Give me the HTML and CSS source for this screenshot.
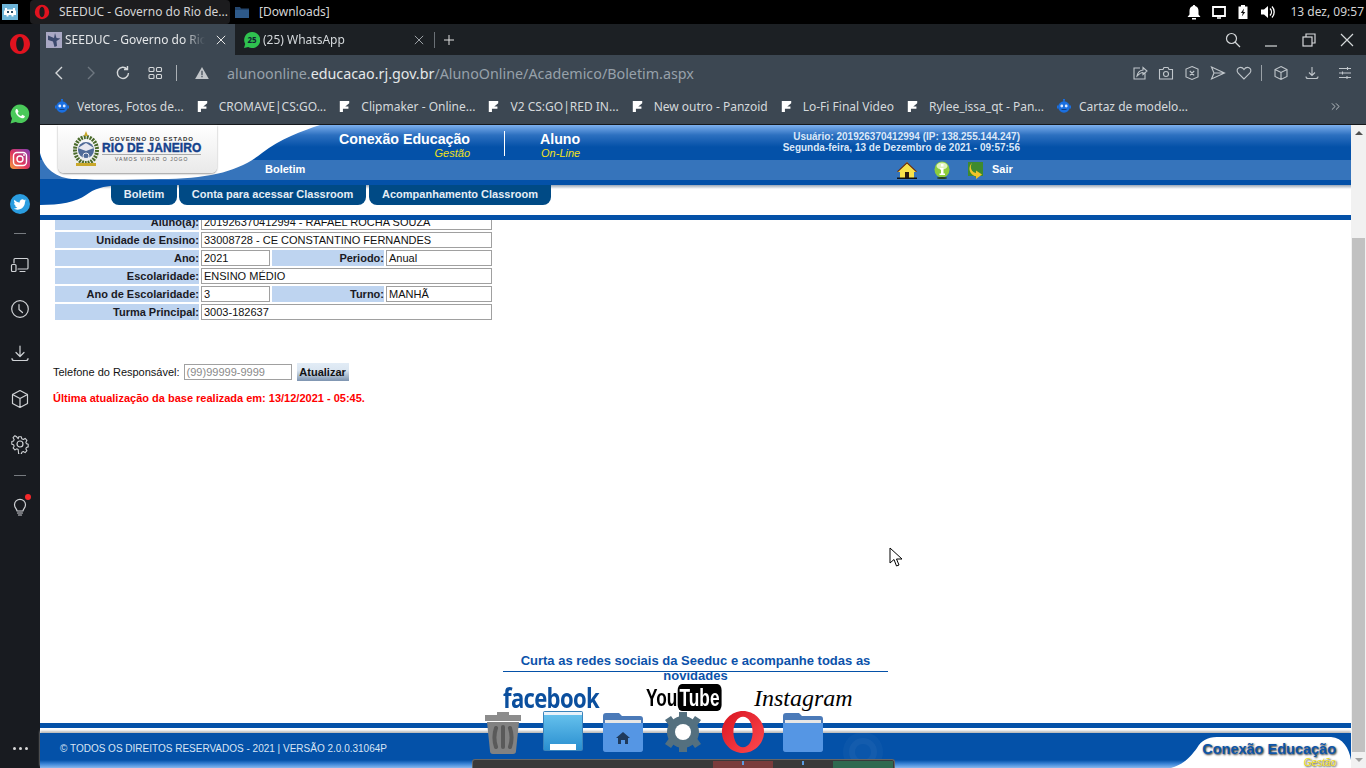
FILE: index.html
```html
<!DOCTYPE html>
<html lang="pt-BR">
<head>
    <meta charset="UTF-8">
    <title>SEEDUC - Governo do Rio de Janeiro</title>
    <link rel="stylesheet" href="styles.css">
</head>
<body>
    <!-- barra do sistema -->
    <div class="sysbar">
        <svg class="sys-app" viewBox="0 0 16 16"><rect width="16" height="16" fill="#6cb4d8"/><path d="M3 4h2v1.500h6V4h2v2.500h1V11h-2.500v1.500h-2V11h-3v1.500h-2V11H2V6.500h1z" fill="#fff"/><path d="M5 7h2v2H5zM9 7h2v2H9z" fill="#27506a"/></svg>
        <div class="task task-active">
            <svg class="task-icon" viewBox="0 0 20 20"><path fill-rule="evenodd" d="M10 1a9 9 0 0 1 9 9 9 9 0 0 1-9 9 9 9 0 0 1-9-9 9 9 0 0 1 9-9zm0 2.500c-2 0-3.300 2.900-3.300 6.500s1.300 6.500 3.300 6.500 3.300-2.900 3.300-6.500S12 3.500 10 3.500z" fill="#e0131f"/></svg>
            <span>SEEDUC - Governo do Rio de...</span>
        </div>
        <div class="task">
            <svg class="task-icon" viewBox="0 0 16 16"><path d="M1 3h5l1 1.500h8V14H1z" fill="#24476f"/><path d="M1 6h14v8H1z" fill="#2e5a8a"/></svg>
            <span>[Downloads]</span>
        </div>
        <div class="sys-right">
            <svg class="sys-ic" viewBox="0 0 16 16"><path d="M8 1c.8 0 1.200.5 1.200 1.100C11.500 2.700 12.500 4.500 12.500 7v3.500L14.500 13h-13l2-2.500V7c0-2.500 1-4.300 3.300-4.900C6.800 1.500 7.200 1 8 1z" fill="#fff"/><rect x="6" y="14" width="4" height="1.500" fill="#fff"/></svg>
            <svg class="sys-ic" viewBox="0 0 16 16"><path d="M2 3h12v9H2z" fill="none" stroke="#fff" stroke-width="1.800"/><path d="M6 14h4" stroke="#fff" stroke-width="1.500"/></svg>
            <svg class="sys-ic" viewBox="0 0 16 16"><path d="M3.500 2.500H6V1h4v1.500h2.500V15h-9z" fill="#fff"/><path d="M9 4.500 5.800 9h2l-1 3.500L10.300 8h-2z" fill="#111"/></svg>
            <svg class="sys-ic" viewBox="0 0 16 16"><path d="M1 5.500h3L8 2v12l-4-3.500H1z" fill="#fff"/><path d="M10 4.500a5 5 0 0 1 0 7M12 2.500a8 8 0 0 1 0 11" fill="none" stroke="#fff" stroke-width="1.300"/></svg>
            <span class="sys-clock">13 dez, 09:57</span>
        </div>
    </div>

    <div class="janela">
        <!-- barra lateral do opera -->
        <aside class="lateral">
            <div class="lat-opera">
                <svg class="ic-20" viewBox="0 0 20 20"><path fill-rule="evenodd" d="M10 0c5.500 0 10 4.500 10 10s-4.500 10-10 10S0 15.500 0 10 4.500 0 10 0zm0 2.800C7.800 2.800 6.200 6 6.200 10s1.600 7.200 3.800 7.200 3.800-3.200 3.800-7.200S12.200 2.800 10 2.800z" fill="#e0131f"/></svg>
            </div>
            <div class="lat-item">
                <svg class="ic-20" viewBox="0 0 20 20"><path d="M10 .500a9.300 9.300 0 0 0-8 14L.5 19.500l5.200-1.400A9.300 9.300 0 1 0 10 .500z" fill="#4ac95a"/><path d="M6.500 5c-1 .600-1.500 2-.8 3.700 1 2.400 3 4.400 5.500 5.400 1.600.600 3 .100 3.500-1 .2-.5.200-1 0-1.200l-2-1c-.3-.1-.5 0-.7.200l-.7.900c-.2.200-.4.200-.6.100-1.200-.5-2.300-1.500-3-2.800-.1-.2-.1-.4.100-.6l.6-.8c.1-.2.100-.4 0-.6l-.8-1.900C7.400 5 7 4.800 6.500 5z" fill="#fff"/></svg>
            </div>
            <div class="lat-item">
                <svg class="ic-20" viewBox="0 0 20 20"><defs><linearGradient id="ig" x1="0" y1="1" x2="1" y2="0"><stop offset="0" stop-color="#f7a33a"/><stop offset=".45" stop-color="#e0365f"/><stop offset="1" stop-color="#7d3fb5"/></linearGradient></defs><rect width="20" height="20" rx="4" fill="url(#ig)"/><rect x="3.500" y="3.500" width="13" height="13" rx="3.500" fill="none" stroke="#fff" stroke-width="1.400"/><circle cx="10" cy="10" r="3" fill="none" stroke="#fff" stroke-width="1.400"/><circle cx="14" cy="6" r=".9" fill="#fff"/></svg>
            </div>
            <div class="lat-item">
                <svg class="ic-20" viewBox="0 0 20 20"><circle cx="10" cy="10" r="10" fill="#2a9de0"/><path d="M16 6.500c-.5.200-1 .4-1.500.4.500-.3 1-.8 1.200-1.400-.5.300-1 .5-1.600.6a2.600 2.600 0 0 0-4.400 2.400C7.600 8.400 5.700 7.400 4.400 5.800c-.7 1.200-.3 2.700.8 3.500-.4 0-.8-.1-1.200-.3 0 1.300.9 2.400 2.100 2.600-.4.100-.8.100-1.200 0 .3 1.100 1.300 1.800 2.500 1.800-1.100.9-2.500 1.300-3.900 1.100 4.900 3 11.700-.1 11.500-7 .5-.3 1-.9 1.500-1.300z" fill="#fff"/></svg>
            </div>
            <div class="lat-sep lat-sep-a"></div>
            <div class="lat-item">
                <svg class="ic-20 traco" viewBox="0 0 20 20"><path d="M4 8V4.500c0-.6.400-1 1-1h12c.6 0 1 .4 1 1V13c0 .6-.4 1-1 1H8M10 16.500h5"/><rect x="1.500" y="9.500" width="4.500" height="7" rx="1"/></svg>
            </div>
            <div class="lat-item lat-curto">
                <svg class="ic-20 traco" viewBox="0 0 20 20"><circle cx="10" cy="10" r="8.300"/><path d="M9 5.500V10.500l3.500 3"/></svg>
            </div>
            <div class="lat-item">
                <svg class="ic-20 traco" viewBox="0 0 20 20"><path d="M10 2v10M6 8.500l4 4 4-4M2 14.500c0 1.300.7 2 2 2h12c1.300 0 2-.7 2-2"/></svg>
            </div>
            <div class="lat-item">
                <svg class="ic-20 traco" viewBox="0 0 20 20"><path d="M10 1.500l7.500 4v9l-7.500 4-7.500-4v-9zM2.500 5.500l7.500 4 7.500-4M10 9.500v9"/></svg>
            </div>
            <div class="lat-item">
                <svg class="ic-20 traco" viewBox="0 0 20 20"><circle cx="10" cy="10" r="3"/><path d="M8.500 2h3l.5 2.200 1.700.8 2-1.200 2 2.200-1.200 2 .6 1.600 2 .6v3l-2 .6-.6 1.600 1.200 2-2 2.200-2-1.200-1.700.8-.5 2.200h-3L8 16.200l-1.700-.8-2 1.200-2-2.200 1.200-2-.6-1.600-2-.6v-3l2-.6.600-1.600-1.200-2 2-2.200 2 1.200L8 4.200z" transform="translate(1 1) scale(.9)"/></svg>
            </div>
            <div class="lat-sep lat-sep-b"></div>
            <div class="lat-item lat-bulb">
                <svg class="ic-20 traco" viewBox="0 0 20 20"><path d="M7 14c0-2-2.500-3-2.500-6.200a5.500 5.500 0 0 1 11 0C15.500 11 13 12 13 14zM7.500 16h5M8.500 18h3"/></svg>
                <span class="bulb-dot"></span>
            </div>
            <div class="lat-dots"><i></i><i></i><i></i></div>
        </aside>

        <div class="navegador">
            <!-- abas -->
            <div class="abas">
                <div class="aba aba-ativa">
                    <svg class="aba-fav" viewBox="0 0 16 16"><rect width="16" height="16" fill="#a9a8c4"/><path d="M2 3.500 8 6l1-5 1.500 5 4 .500-4 2.500.5 5-2.500 1L7 9.500 2 8z" fill="#3c4a6e"/></svg>
                    <span class="aba-texto">SEEDUC - Governo do Rio</span>
                    <svg class="aba-x" viewBox="0 0 12 12"><path d="M1 1l10 10M11 1 1 11"/></svg>
                </div>
                <div class="aba aba-wa">
                    <svg class="aba-fav" viewBox="0 0 16 16"><path d="M8 0a8 8 0 0 0-6.800 12L0 16l4.200-1.100A8 8 0 1 0 8 0z" fill="#2fc24f"/><text x="8" y="11" class="aba-num">25</text></svg>
                    <span class="aba-texto aba-texto-wa">(25) WhatsApp</span>
                    <svg class="aba-x aba-x-2" viewBox="0 0 12 12"><path d="M1 1l10 10M11 1 1 11"/></svg>
                </div>
                <div class="aba-div"></div>
                <svg class="aba-mais" viewBox="0 0 12 12"><path d="M6 0v12M0 6h12"/></svg>
                <div class="janela-btns">
                    <svg class="jb" viewBox="0 0 16 16"><circle cx="6.500" cy="6.500" r="5"/><path d="M10 10l5 5"/></svg>
                    <svg class="jb" viewBox="0 0 16 16"><path d="M2 14h12"/></svg>
                    <svg class="jb" viewBox="0 0 16 16"><rect x="2" y="5" width="9" height="9"/><path d="M5 5V2h9v9h-3"/></svg>
                    <svg class="jb" viewBox="0 0 16 16"><path d="M2 2l12 12M14 2 2 14"/></svg>
                </div>
            </div>

            <!-- barra de endereco -->
            <div class="ferramentas">
                <svg class="tb tb-seta" viewBox="0 0 16 16"><path d="M11 2 5 8l6 6"/></svg>
                <svg class="tb tb-seta tb-off" viewBox="0 0 16 16"><path d="M5 2l6 6-6 6"/></svg>
                <svg class="tb tb-reload" viewBox="0 0 16 16"><path d="M13.500 8A5.600 5.600 0 1 1 12 4M12.500 1v3.500H9"/></svg>
                <svg class="tb tb-grid" viewBox="0 0 16 16"><rect x="2" y="2.500" width="5" height="4" rx="1"/><rect x="9.500" y="2.500" width="5" height="4" rx="1"/><rect x="2" y="9.500" width="5" height="4" rx="1"/><rect x="9.500" y="9.500" width="5" height="4" rx="1"/></svg>
                <div class="tb-div"></div>
                <svg class="tb-alerta" viewBox="0 0 16 14"><path d="M8 0 16 14H0z" fill="#c2c6ca"/><path d="M7.300 4.500h1.400v5H7.300zM7.300 10.500h1.400V12H7.300z" fill="#3c4752"/></svg>
                <div class="url">alunoonline.<span class="url-dom">educacao.rj.gov.br</span>/AlunoOnline/Academico/Boletim.aspx</div>
                <div class="tb-acoes">
                    <svg class="ta" viewBox="0 0 16 16"><path d="M8 3H2v11h11V8M5 11c.5-3 2.500-5.500 6-6V2.500L15 6l-4 3.500V7.500C9 7.500 7 9 5 11z"/></svg>
                    <svg class="ta" viewBox="0 0 16 16"><path d="M1.500 4.500H5L6 2.500h4l1 2h3.500V14h-13z"/><circle cx="8" cy="9" r="2.500"/></svg>
                    <svg class="ta" viewBox="0 0 16 16"><path d="M8 1.500 14 4v8l-6 2.500L2 12V4zM5.800 6l4.400 4.400M10.200 6l-4.400 4.400"/></svg>
                    <svg class="ta" viewBox="0 0 16 16"><path d="M1.500 2 14.500 8 1.500 14 4 8zM4 8h10"/></svg>
                    <svg class="ta" viewBox="0 0 16 16"><path d="M8 14 2 8C.5 6 1 3.500 3 2.700 5 2 7 3 8 4.500 9 3 11 2 13 2.700c2 .8 2.500 3.300 1 5.300z"/></svg>
                    <div class="ta-div"></div>
                    <svg class="ta" viewBox="0 0 16 16"><path d="M8 1.500l6 3v7l-6 3-6-3v-7zM2 4.500l6 3 6-3M8 7.500v7"/></svg>
                    <svg class="ta ta-dl" viewBox="0 0 16 16"><path d="M8 2v8M5 7.500l3 3 3-3M2 11.500c0 1.500.5 2 2 2h8c1.500 0 2-.5 2-2"/></svg>
                    <svg class="ta ta-aj" viewBox="0 0 16 16"><path d="M2 3.500h12M2 8h12M2 12.500h12M10.500 2v3M5.500 6.500v3M10 11v3"/></svg>
                </div>
            </div>

            <!-- favoritos -->
            <div class="favoritos">
                <div class="fav"><svg class="fav-robo" viewBox="0 0 14 14"><circle cx="7" cy="8" r="5.800" fill="#1a6fe0"/><path d="M6.400 0h1.200v3H6.400zM0 6.500h1.500v3H0zM12.500 6.500H14v3h-1.500z" fill="#1a6fe0"/><circle cx="7" cy="0.800" r="1" fill="#1a6fe0"/><circle cx="4.800" cy="7" r="1.400" fill="#dbe8ff"/><circle cx="9.200" cy="7" r="1.400" fill="#dbe8ff"/><path d="M4.500 10.500h5" stroke="#0f3f85"/></svg><span>Vetores, Fotos de...</span></div>
                <div class="fav"><svg class="fav-p" viewBox="0 0 14 14"><path d="M1 0h12v3L8 7h4v3H5v4H1z" fill="#fff"/></svg><span>CROMAVE|CS:GO...</span></div>
                <div class="fav"><svg class="fav-p" viewBox="0 0 14 14"><path d="M1 0h12v3L8 7h4v3H5v4H1z" fill="#fff"/></svg><span>Clipmaker - Online...</span></div>
                <div class="fav"><svg class="fav-p" viewBox="0 0 14 14"><path d="M1 0h12v3L8 7h4v3H5v4H1z" fill="#fff"/></svg><span>V2 CS:GO|RED IN...</span></div>
                <div class="fav"><svg class="fav-p" viewBox="0 0 14 14"><path d="M1 0h12v3L8 7h4v3H5v4H1z" fill="#fff"/></svg><span>New outro - Panzoid</span></div>
                <div class="fav"><svg class="fav-p" viewBox="0 0 14 14"><path d="M1 0h12v3L8 7h4v3H5v4H1z" fill="#fff"/></svg><span>Lo-Fi Final Video</span></div>
                <div class="fav"><svg class="fav-p" viewBox="0 0 14 14"><path d="M1 0h12v3L8 7h4v3H5v4H1z" fill="#fff"/></svg><span>Rylee_issa_qt - Pan...</span></div>
                <div class="fav"><svg class="fav-robo" viewBox="0 0 14 14"><circle cx="7" cy="8" r="5.800" fill="#1a6fe0"/><path d="M6.400 0h1.200v3H6.400zM0 6.500h1.500v3H0zM12.500 6.500H14v3h-1.500z" fill="#1a6fe0"/><circle cx="7" cy="0.800" r="1" fill="#1a6fe0"/><circle cx="4.800" cy="7" r="1.400" fill="#dbe8ff"/><circle cx="9.200" cy="7" r="1.400" fill="#dbe8ff"/><path d="M4.500 10.500h5" stroke="#0f3f85"/></svg><span>Cartaz de modelo...</span></div>
                <svg class="fav-mais" viewBox="0 0 10 10"><path d="M1 1.500 4.500 5 1 8.500M5.500 1.500 9 5 5.500 8.500"/></svg>
            </div>

            <!-- pagina -->
            <div class="area">
                <div class="pagina">
                    <header class="topo">
                        <div class="topo-azul">
                            <div class="topo-titulo">
                                <div class="sistema sistema-a"><strong>Conexão Educação</strong><em>Gestão</em></div>
                                <div class="sistema sistema-b"><strong>Aluno</strong><em>On-Line</em></div>
                            </div>
                            <div class="usuario">Usuário: 201926370412994 (IP: 138.255.144.247)<br>Segunda-feira, 13 de Dezembro de 2021 - 09:57:56</div>
                        </div>
                        <div class="topo-faixa">
                            <span class="faixa-titulo">Boletim</span>
                            <svg class="fx-home" viewBox="0 0 20 18"><path d="M10 1 0 11h3v6h14v-6h3z" fill="#f8e24a"/><path d="M10 1 0 10.500l1 .5 9-8.500L19 11l1-.5z" fill="#5a1c10"/><rect x="8" y="11" width="4" height="6" fill="#2a1a10"/><rect y="16.500" width="20" height="1.500" fill="#111"/></svg>
                            <svg class="fx-info" viewBox="0 0 16 18"><ellipse cx="8" cy="8.500" rx="7.500" ry="8" fill="#8ccc3c"/><ellipse cx="8" cy="5" rx="5.500" ry="3.500" fill="#dff2bd"/><path d="M6 7h3.500v5.500H11V14H5.500v-1.500H7V8.500H6zM7 3h2.500v2.500H7z" fill="#fff"/><ellipse cx="8" cy="17" rx="5" ry="1" fill="#26401c"/></svg>
                            <svg class="fx-sair" viewBox="0 0 18 18"><path d="M0 1h15v14H8v2l-2-2H0z" fill="#3e8a2e"/><path d="M4 2C1.500 6 3 11 8 12V9.500l6 4-6 4.500v-2.800C2 14 -1 7 4 2z" fill="#f2c428"/></svg>
                            <span class="faixa-sair">Sair</span>
                        </div>
                        <div class="topo-menu">
                            <a class="menu-aba menu-1">Boletim</a>
                            <a class="menu-aba menu-2">Conta para acessar Classroom</a>
                            <a class="menu-aba menu-3">Acompanhamento Classroom</a>
                        </div>
                        <div class="topo-linha"></div>
                        <!-- curva branca e logo do governo por cima do azul -->
                        <svg class="topo-curva" viewBox="0 0 320 90"><path d="M0 54H80V60C62 61 54 64 46 70 36 77 20 80 0 80z" fill="#0451a8"/><path d="M0 0H280C262 6 240 14 222 28 200 46 170 54 120 54 90 55 50 55 32 54 12 52 3 40 0 28z" fill="#fff"/></svg>
                        <div class="logo-gov">
                            <svg class="brasao" viewBox="0 0 28 38"><ellipse cx="14" cy="20" rx="11" ry="13" fill="none" stroke="#4a6a2a" stroke-width="4" stroke-dasharray="2 1"/><circle cx="14" cy="20" r="8" fill="#4f6a98"/><path d="M6 18l8-5 8 5-8 3z" fill="#e8e8ef"/><circle cx="14" cy="26" r="3" fill="none" stroke="#e8e8ef"/><path d="M14 1l2 5h-4z" fill="#c9a82b"/><rect x="4" y="33" width="20" height="3" fill="#c9a82b"/></svg>
                            <div class="logo-texto">
                                <span class="logo-a">GOVERNO DO ESTADO</span>
                                <span class="logo-b">RIO DE JANEIRO</span>
                                <span class="logo-c">VAMOS VIRAR O JOGO</span>
                            </div>
                        </div>
                    </header>

                    <main class="conteudo">
                        <div class="ficha">
                            <div class="rotulo">Aluno(a):</div><div class="valor v-largo">201926370412994 - RAFAEL ROCHA SOUZA</div>
                            <div class="rotulo">Unidade de Ensino:</div><div class="valor v-largo">33008728 - CE CONSTANTINO FERNANDES</div>
                            <div class="rotulo">Ano:</div><div class="valor">2021</div><div class="rotulo">Periodo:</div><div class="valor">Anual</div>
                            <div class="rotulo">Escolaridade:</div><div class="valor v-largo">ENSINO MÉDIO</div>
                            <div class="rotulo">Ano de Escolaridade:</div><div class="valor">3</div><div class="rotulo">Turno:</div><div class="valor">MANHÃ</div>
                            <div class="rotulo">Turma Principal:</div><div class="valor v-largo">3003-182637</div>
                        </div>
                        <div class="telefone">
                            <label class="tel-rotulo">Telefone do Responsável:</label>
                            <div class="tel-campo">(99)99999-9999</div>
                            <div class="tel-btn">Atualizar</div>
                        </div>
                        <p class="aviso">Última atualização da base realizada em: 13/12/2021 - 05:45.</p>
                    </main>

                    <section class="redes">
                        <div class="redes-titulo">
                            <span>Curta as redes sociais da Seeduc e acompanhe todas as novidades</span>
                        </div>
                        <div class="redes-logos">
                            <span class="r-face">facebook</span>
                            <span class="r-yt">You<b>Tube</b></span>
                            <span class="r-insta">Instagram</span>
                        </div>
                    </section>

                    <footer class="rodape">
                        <div class="rodape-linha"></div>
                        <div class="rodape-azul"><span>© TODOS OS DIREITOS RESERVADOS - 2021 | VERSÃO 2.0.0.31064P</span></div>
                        <svg class="rodape-curva" viewBox="0 0 180 40"><path d="M0 40C14 36 20 28 26 20 30 13 36 9 46 9H160C172 10 178 20 180 32V40z" fill="#fff"/></svg>
                        <div class="rodape-marca"><strong>Conexão Educação</strong><em>Gestão</em></div>
                    </footer>
                </div>

                <div class="rolagem">
                    <span class="rol-cima"></span>
                    <div class="rol-barra"></div>
                    <span class="rol-baixo"></span>
                </div>
            </div>
        </div>
    </div>

    <!-- dock do sistema, por cima de tudo -->
    <div class="dock">
        <svg class="dk" viewBox="0 0 40 44"><path d="M14 2h12v3h12v6H2V5h12z" fill="#8c8c8c"/><path d="M4 12h32l-3 29c0 2-1 3-3 3H10c-2 0-3-1-3-3z" fill="#828282"/><path d="M13 18c-2 6-2 13 0 19M20 17v20M27 18c2 6 2 13 0 19" fill="none" stroke="#5a5a5a" stroke-width="4" stroke-linecap="round"/></svg>
        <svg class="dk" viewBox="0 0 40 44"><defs><linearGradient id="jan" x1="0" y1="0" x2="0" y2="1"><stop offset="0" stop-color="#64c0ec"/><stop offset="1" stop-color="#2a8fd0"/></linearGradient></defs><rect y="1" width="40" height="40" rx="2" fill="#3b84bb"/><rect x="1" y="5" width="38" height="35" fill="url(#jan)"/><rect x="1" y="2" width="38" height="3" fill="#e8f2fa"/><rect x="7" y="34" width="26" height="6" fill="#fff"/></svg>
        <svg class="dk" viewBox="0 0 40 44"><path d="M0 6c0-2 1-3 3-3h13l3 3h18c2 0 3 1 3 3v30c0 2-1 3-3 3H3c-2 0-3-1-3-3z" fill="#4b7ab8"/><rect x="2" y="10" width="36" height="6" fill="#e6e6e6"/><path d="M0 13h40v26c0 2-1 3-3 3H3c-2 0-3-1-3-3z" fill="#5596e4"/><path d="M20 22l7 6h-2v6h-3v-4h-4v4h-3v-6h-2z" fill="#1f3a5c"/></svg>
        <svg class="dk" viewBox="0 0 40 44"><circle cx="20" cy="22" r="11" fill="none" stroke="#54707f" stroke-width="10"/><path d="M16 2h8v8h-8zM16 34h8v8h-8zM2 10l6-4 5 7-6 4zM38 10l-6-4-5 7 6 4zM2 34l6 4 5-7-6-4zM38 34l-6 4-5-7 6-4z" fill="#54707f"/><circle cx="20" cy="22" r="8" fill="#fff"/></svg>
        <svg class="dk dk-opera" viewBox="0 0 44 46"><defs><linearGradient id="op" x1="0" y1="0" x2="1" y2="1"><stop offset="0" stop-color="#d81420"/><stop offset="1" stop-color="#ff4a50"/></linearGradient></defs><path fill-rule="evenodd" d="M22 1c12 0 22 10 22 22S34 45 22 45 0 35 0 23 10 1 22 1zm0 6c-6 0-10 7-10 16s4 16 10 16 10-7 10-16S28 7 22 7z" fill="url(#op)"/></svg>
        <svg class="dk" viewBox="0 0 40 44"><path d="M0 6c0-2 1-3 3-3h13l3 3h18c2 0 3 1 3 3v30c0 2-1 3-3 3H3c-2 0-3-1-3-3z" fill="#4b7ab8"/><rect x="2" y="10" width="36" height="6" fill="#e6e6e6"/><path d="M0 13h40v26c0 2-1 3-3 3H3c-2 0-3-1-3-3z" fill="#5596e4"/></svg>
        <svg class="dk dk-fantasma" viewBox="0 0 40 44"><circle cx="20" cy="22" r="20" fill="#fff" opacity=".03"/><circle cx="20" cy="22" r="11" fill="none" stroke="#fff" stroke-width="6" opacity=".04"/></svg>
    </div>
    <div class="dock-painel">
        <span class="dp-bloco dp-vermelho"><i></i></span>
        <span class="dp-bloco dp-cinza"><i></i></span>
        <span class="dp-bloco dp-verde"></span>
    </div>

    <svg class="cursor" viewBox="0 0 14 20"><path d="M1 1v15l4-3.500L7.500 19l2.500-1-2.500-6H13z" fill="#fff" stroke="#000"/></svg>
</body>
</html>
```

FILE: styles.css
```css
/* -------------------------base------------------------ */
* {
    box-sizing: border-box;
}

body {
    margin: 0;
    width: 1366px;
    height: 768px;
    overflow: hidden;
    position: relative;
    display: flex;
    flex-direction: column;
    font-family: "Noto Sans", sans-serif;
    background-color: #181b20;
}

svg {
    display: block;
    flex-shrink: 0;
}

/* -------------------------barra do sistema------------------------ */
.sysbar {
    height: 24px;
    background-color: #000;
    display: flex;
    align-items: center;
    padding-left: 2px;
    color: #d4d4d4;
    font-size: 12px;
}

.sys-app {
    width: 16px;
    height: 16px;
    margin-right: 12px;
}

.task {
    height: 24px;
    display: flex;
    align-items: center;
}

.task span {
    padding-bottom: 2px;
}

.task-active {
    width: 200px;
    background-color: #1c1c1e;
    border-radius: 4px;
    padding-left: 4px;
    margin-right: 4px;
}

.task-icon {
    width: 16px;
    height: 16px;
    margin-right: 9px;
}

.sys-right {
    margin-left: auto;
    display: flex;
    align-items: center;
}

.sys-ic {
    width: 16px;
    height: 16px;
    margin-right: 8.5px;
}

.sys-clock {
    margin-left: 6px;
    margin-right: 2px;
    padding-bottom: 2px;
}

/* -------------------------janela------------------------ */
.janela {
    flex: 1;
    display: flex;
    min-height: 0;
}

.lateral {
    width: 40px;
    background-color: #181b20;
    display: flex;
    flex-direction: column;
    align-items: center;
}

.ic-20 {
    width: 20px;
    height: 20px;
}

.traco {
    fill: none;
    stroke: #cfd2d5;
    stroke-width: 1.200;
    stroke-linecap: round;
    stroke-linejoin: round;
}

.lat-opera {
    height: 40px;
    margin-bottom: 27px;
    display: flex;
    align-items: center;
}

.lat-item {
    height: 45px;
    display: flex;
    align-items: center;
    position: relative;
}

.lat-curto {
    height: 44px;
}

.lat-sep {
    width: 12px;
    border-top: 1px solid #777b80;
}

.lat-sep-a {
    margin: 7px 0 8px;
}

.lat-sep-b {
    margin: 9px 0 8px;
}

.bulb-dot {
    position: absolute;
    top: 10px;
    right: -1px;
    width: 6px;
    height: 6px;
    border-radius: 50%;
    background-color: #f5282a;
}

.lat-dots {
    margin-top: auto;
    margin-bottom: 18px;
    display: flex;
    gap: 3px;
}

.lat-dots i {
    width: 3px;
    height: 3px;
    border-radius: 50%;
    background-color: #d8d8d8;
}

.navegador {
    flex: 1;
    min-width: 0;
    display: flex;
    flex-direction: column;
}

/* -------------------------abas------------------------ */
.abas {
    height: 31px;
    display: flex;
    align-items: center;
    background-color: #1c2024;
    color: #d4d8db;
    font-size: 12px;
}

.aba {
    height: 31px;
    width: 195px;
    display: flex;
    align-items: center;
}

.aba-ativa {
    background-color: #3c4752;
    padding-left: 6px;
    color: #e4e6e8;
}

.aba-wa {
    padding-left: 9px;
}

.aba-fav {
    width: 16px;
    height: 16px;
    margin-right: 3px;
}

.aba-texto {
    width: 140px;
    overflow: hidden;
    white-space: nowrap;
    -webkit-mask-image: linear-gradient(to right, #000 85%, transparent);
    mask-image: linear-gradient(to right, #000 85%, transparent);
}

.aba-texto-wa {
    width: 150px;
}

.aba-num {
    font-size: 8px;
    font-weight: 700;
    fill: #123;
    text-anchor: middle;
}

.aba-x {
    width: 10px;
    height: 10px;
    margin-left: 11px;
    fill: none;
    stroke: #e6e6e6;
    stroke-width: 1.200;
}

.aba-x-2 {
    stroke: #9ca1a6;
    margin-left: 1px;
}

.aba-div {
    width: 1px;
    height: 16px;
    background-color: #6a7076;
    margin-left: 4px;
}

.aba-mais {
    width: 10px;
    height: 10px;
    margin-left: 9px;
    fill: none;
    stroke: #e0e0e0;
    stroke-width: 1.200;
}

.janela-btns {
    margin-left: auto;
    display: flex;
    align-items: center;
    gap: 22px;
    padding-right: 11px;
}

.jb {
    width: 16px;
    height: 16px;
    fill: none;
    stroke: #d5d8da;
    stroke-width: 1.200;
}

/* -------------------------barra de endereco------------------------ */
.ferramentas {
    height: 35px;
    background-color: #3c4752;
    display: flex;
    align-items: center;
    padding-left: 11px;
}

.tb {
    width: 16px;
    height: 16px;
    fill: none;
    stroke: #d5d8da;
    stroke-width: 1.400;
    margin-right: 16px;
}

.tb-off {
    stroke: #6e7780;
}

.tb-grid {
    stroke-width: 1.100;
    margin-right: 13px;
}

.tb-div {
    width: 1px;
    height: 16px;
    background-color: #aab0b5;
    margin-right: 18px;
}

.tb-alerta {
    width: 14px;
    height: 12px;
    margin-right: 18px;
}

.url {
    font-size: 14.3px;
    padding-top: 1px;
    color: #97a1aa;
    white-space: nowrap;
}

.url-dom {
    color: #e4e7e9;
}

.tb-acoes {
    margin-left: auto;
    display: flex;
    align-items: center;
    padding-right: 13px;
}

.ta {
    width: 16px;
    height: 16px;
    fill: none;
    stroke: #c0c6cb;
    stroke-width: 1.100;
    margin-right: 10px;
}

.ta-div {
    width: 1px;
    height: 16px;
    background-color: #9aa1a7;
    margin: 0 11px 0 -1px;
}

.ta-dl {
    margin-left: 5px;
    margin-right: 17px;
}

.ta-aj {
    margin-right: 0;
}

/* -------------------------favoritos------------------------ */
.favoritos {
    height: 35px;
    background-color: #3c4752;
    border-bottom: 1px solid #15181b;
    display: flex;
    align-items: center;
    padding-left: 15px;
    padding-bottom: 2px;
    gap: 13px;
    color: #d5d9dc;
    font-size: 12px;
    white-space: nowrap;
}

.fav {
    display: flex;
    align-items: center;
    gap: 8px;
}

.fav-robo,
.fav-p {
    width: 14px;
    height: 14px;
}

.fav-p {
    width: 11px;
    height: 11px;
    margin-right: 3px;
}

.fav-mais {
    width: 9px;
    height: 9px;
    margin-left: auto;
    margin-right: 26px;
    fill: none;
    stroke: #c4c9cd;
    stroke-width: 1;
}

/* -------------------------pagina------------------------ */
.area {
    flex: 1;
    display: flex;
    min-height: 0;
}

.pagina {
    flex: 1;
    min-width: 0;
    display: flex;
    flex-direction: column;
    background-color: #fff;
    font-family: "Liberation Sans", Arial, sans-serif;
}

.topo {
    height: 95px;
    position: relative;
    flex-shrink: 0;
}

.topo-azul {
    height: 35px;
    background: linear-gradient(#7db0ee 0, #2d70c0 10px, #0451a8 22px);
    display: flex;
    justify-content: space-between;
    padding-right: 331px;
    color: #fff;
}

.topo-titulo {
    display: flex;
    padding-left: 299px;
    padding-top: 5px;
}

.sistema {
    display: flex;
    flex-direction: column;
    align-items: flex-end;
    white-space: nowrap;
}

.sistema strong {
    font-size: 14.2px;
    line-height: 18px;
}

.sistema em {
    font-size: 11px;
    line-height: 11px;
    color: #f0e020;
}

.sistema-a {
    width: 131px;
    margin-right: 70px;
    position: relative;
}

.sistema-a::after {
    content: "";
    position: absolute;
    right: -35px;
    top: 1px;
    width: 1px;
    height: 25px;
    background-color: #fff;
}

.usuario {
    font-size: 10px;
    font-weight: 700;
    line-height: 11px;
    text-align: right;
    color: #dce8f8;
    padding-top: 6px;
    white-space: nowrap;
}

.topo-faixa {
    height: 20px;
    background-color: #3674bb;
    display: flex;
    align-items: center;
    color: #fff;
    font-size: 11px;
    font-weight: 700;
    padding-left: 225px;
}

.faixa-titulo {
    width: 632px;
    padding-bottom: 2px;
}

.fx-home {
    width: 20px;
    height: 18px;
    margin-right: 17px;
}

.fx-info {
    width: 16px;
    height: 18px;
    margin-right: 18px;
}

.fx-sair {
    width: 18px;
    height: 18px;
    margin-right: 6px;
}

.faixa-sair {
    font-size: 11px;
    padding-bottom: 2px;
}

.topo-menu {
    height: 35px;
    background: linear-gradient(#0451a8 5px, #9aa6b4 5px, #fff 9px);
    display: flex;
    padding-left: 71px;
    gap: 2px;
}

.menu-aba {
    height: 25px;
    background: linear-gradient(#0451a8 5px, #004a85 5px);
    border-radius: 0 0 8px 8px;
    color: #e6eef6;
    font-size: 11px;
    font-weight: 700;
    text-align: center;
    padding-top: 8px;
}

.menu-1 {
    width: 66px;
}

.menu-2 {
    width: 187px;
}

.menu-3 {
    width: 182px;
    margin-left: 1px;
}

.topo-linha {
    height: 5px;
    background-color: #0451a8;
}

.topo-curva {
    position: absolute;
    left: 0;
    top: 0;
    width: 320px;
    height: 90px;
    pointer-events: none;
}

/* o menu fica na frente da curva de baixo */
.topo-menu .menu-aba {
    position: relative;
    z-index: 1;
}

.logo-gov {
    position: absolute;
    left: 18px;
    top: 0;
    width: 159px;
    height: 48px;
    background: linear-gradient(#fff, #e9e9e9);
    border-radius: 0 0 6px 6px;
    box-shadow: 0 1px 2px #999;
    display: flex;
    align-items: center;
    padding-left: 14px;
    gap: 2px;
}

.brasao {
    width: 28px;
    height: 38px;
}

.logo-texto {
    display: flex;
    flex-direction: column;
    align-items: center;
    color: #14418c;
    white-space: nowrap;
}

.logo-a {
    font-size: 6px;
    font-weight: 700;
    letter-spacing: 1px;
    color: #333;
}

.logo-b {
    font-size: 12px;
    font-weight: 700;
    letter-spacing: .1px;
    -webkit-text-stroke: .4px #14418c;
    border-bottom: 1px solid #aaa;
    line-height: 12px;
}

.logo-c {
    font-size: 5px;
    letter-spacing: 1px;
    color: #555;
    line-height: 8px;
}

/* -------------------------conteudo------------------------ */
.conteudo {
    flex: 1;
    min-height: 0;
    overflow: hidden;
    padding-left: 13px;
    font-size: 11px;
    color: #111;
}

.ficha {
    width: 437px;
    margin-top: -6px;
    margin-left: 2px;
    display: grid;
    grid-template-columns: 144px 69px 112px 106px;
    grid-auto-rows: 16px;
    gap: 2px;
}

.rotulo {
    background-color: #bed4f0;
    font-weight: 700;
    text-align: right;
    line-height: 16px;
    color: #1a1a24;
}

.valor {
    border: 1px solid #a0a0a0;
    line-height: 14px;
    padding-left: 2px;
    white-space: nowrap;
}

.v-largo {
    grid-column: span 3;
}

.telefone {
    margin-top: 43px;
    display: flex;
    align-items: center;
}

.tel-rotulo {
    margin-right: 4px;
}

.tel-campo {
    width: 108px;
    height: 16px;
    border: 1px solid #a0a0a0;
    color: #8a8a8a;
    line-height: 14px;
    padding-left: 2px;
    margin-right: 5px;
}

.tel-btn {
    width: 52px;
    height: 18px;
    background: linear-gradient(#e2ecf6, #dbe6f1 40%, #7d94b0);
    font-weight: 700;
    line-height: 18px;
    text-align: center;
}

.aviso {
    margin: 11px 0 0;
    color: #f00;
    font-weight: 700;
    line-height: 13px;
}

/* -------------------------redes sociais------------------------ */
.redes {
    height: 70px;
    flex-shrink: 0;
    padding-left: 463px;
    position: relative;
}

.redes-titulo {
    width: 385px;
    font-size: 13px;
    font-weight: 700;
    line-height: 15px;
    text-align: center;
    color: #0b52aa;
    height: 32px;
    position: relative;
}

.redes-titulo::after {
    content: "";
    position: absolute;
    left: 0;
    right: 0;
    top: 18px;
    border-top: 1px solid #0451a8;
}

.redes-logos {
    display: flex;
    align-items: center;
    height: 26px;
    white-space: nowrap;
}

.r-face {
    font-family: "Open Sans", sans-serif;
    font-weight: 700;
    font-size: 26px;
    letter-spacing: -.8px;
    color: #0b4f9e;
    width: 143px;
    transform: scaleX(.85);
    transform-origin: left center;
}

.r-yt {
    font-weight: 700;
    font-size: 24px;
    color: #000;
    width: 108px;
    transform: scaleX(.72);
    transform-origin: left center;
}

.r-yt b {
    display: inline-block;
    background-color: #000;
    color: #fff;
    border-radius: 6px;
    padding: 0 3px;
    line-height: 27px;
}

.r-insta {
    font-family: "Liberation Serif", serif;
    font-style: italic;
    font-size: 24px;
    color: #000;
}

/* -------------------------rodape------------------------ */
.rodape {
    height: 45px;
    position: relative;
    flex-shrink: 0;
}

.rodape-linha {
    height: 5px;
    background-color: #0451a8;
    margin-bottom: 5px;
}

.rodape-azul {
    height: 35px;
    background: linear-gradient(#0451a8 27px, #3d86d8 31px, #8ab8ee);
    box-shadow: 0 -2px 2px #bbb;
    padding: 10px 0 0 20px;
    font-size: 10px;
    color: #d8e4f4;
}

.rodape-curva {
    position: absolute;
    right: 0;
    bottom: 0;
    width: 180px;
    height: 40px;
}

.rodape-marca {
    position: absolute;
    right: 15px;
    bottom: 0;
    display: flex;
    flex-direction: column;
    align-items: flex-end;
    text-shadow: 1px 1px 2px #333;
}

.rodape-marca strong {
    font-size: 14.5px;
    line-height: 16px;
    color: #0d55a8;
}

.rodape-marca em {
    font-size: 10px;
    line-height: 11px;
    color: #f0e020;
}

/* -------------------------scroll------------------------ */
.rolagem {
    width: 15px;
    background-color: #f1f1f1;
    display: flex;
    flex-direction: column;
    align-items: center;
    position: relative;
}

.rol-cima {
    margin-top: 6px;
    border-left: 4px solid transparent;
    border-right: 4px solid transparent;
    border-bottom: 4px solid #505050;
}

.rol-barra {
    position: absolute;
    top: 113px;
    left: 1px;
    right: 1px;
    bottom: 16px;
    background-color: #c1c1c1;
}

.rol-baixo {
    margin-top: auto;
    margin-bottom: 6px;
    border-left: 4px solid transparent;
    border-right: 4px solid transparent;
    border-top: 4px solid #a0a0a0;
}

/* -------------------------dock e cursor------------------------ */
.dock {
    position: absolute;
    left: 483px;
    top: 710px;
    display: flex;
    gap: 20px;
    align-items: flex-start;
}

.dk {
    width: 40px;
    height: 44px;
}

.dk-opera {
    width: 44px;
    margin: 0 -2px;
}

.dk-fantasma {
    margin-top: 20px;
}

.dock-painel {
    position: absolute;
    left: 472px;
    top: 759px;
    width: 423px;
    height: 9px;
    background-color: #3a3a3a;
    border: 1px solid #666;
    border-bottom: none;
    border-radius: 3px 3px 0 0;
    display: flex;
    padding: 1px 1px 0 240px;
}

.dp-bloco {
    width: 60px;
    height: 8px;
    display: flex;
    justify-content: center;
}

.dp-bloco i {
    width: 2px;
    height: 4px;
    background-color: #5b9be0;
}

.dp-vermelho {
    background-color: #7a3c3c;
}

.dp-verde {
    background-color: #2f6a50;
}

.cursor {
    position: absolute;
    left: 889px;
    top: 547px;
    width: 14px;
    height: 20px;
}
```
